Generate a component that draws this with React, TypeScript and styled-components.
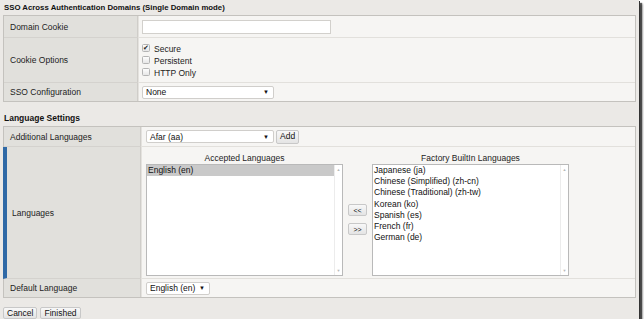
import React from "react";
import styled, { createGlobalStyle } from "styled-components";

const GlobalStyle = createGlobalStyle`
  html, body {
    margin: 0;
    padding: 0;
    background: #ffffff;
  }
  body {
    font-family: "Liberation Sans", Arial, sans-serif;
    font-size: 8.5px;
    color: #222;
  }
`;

const Page = styled.div`
  width: 639px;
  height: 319px;
  box-sizing: border-box;
  padding: 0 3px;
  background: #ebe9e6;
  overflow: hidden;
  box-shadow: 1px 1px 0 #333, 3px 3px 1px rgba(0, 0, 0, 0.6), 4px 4px 2px rgba(0, 0, 0, 0.3);
`;

const SectionTitle = styled.div<{ $top?: number; $size?: number }>`
  margin-top: ${(p) => p.$top ?? 0}px;
  height: 15px;
  line-height: 15px;
  padding-left: 1px;
  font-weight: bold;
  font-size: ${(p) => p.$size ?? 8.5}px;
  color: #111;
`;

const Table = styled.div<{ $labelWidth: number }>`
  display: grid;
  grid-template-columns: ${(p) => p.$labelWidth}px 1fr;
  border: 1px solid #c4c2be;
  background: #f6f5f3;
`;

const Label = styled.div<{ $h: number; $accent?: boolean }>`
  height: ${(p) => p.$h}px;
  display: flex;
  align-items: center;
  padding-left: ${(p) => (p.$accent ? 5 : 6)}px;
  background: #e1e0dc;
  border-left: ${(p) => (p.$accent ? "4px solid #2f69a6" : "0")};
  margin-left: ${(p) => (p.$accent ? "-1px" : "0")};
  border-right: 1px solid #cfcdc9;
  border-bottom: 1px solid #d4d2ce;
  &:nth-last-child(2) {
    border-bottom: 0;
  }
`;

const Value = styled.div<{ $h: number; $pad?: number }>`
  height: ${(p) => p.$h}px;
  display: flex;
  align-items: center;
  padding-left: ${(p) => p.$pad ?? 3}px;
  border-left: 1px solid #e4e2de;
  border-bottom: 1px solid #e2e0dc;
  &:last-child {
    border-bottom: 0;
  }
`;

const TextInput = styled.div`
  width: 189px;
  height: 14px;
  box-sizing: border-box;
  background: #fff;
  border: 1px solid #d2d0cc;
`;

const CheckList = styled.div`
  display: flex;
  flex-direction: column;
  padding-top: 1px;
`;

const CheckRow = styled.div`
  display: flex;
  align-items: center;
  height: 12px;
  gap: 4px;
`;

const Box = styled.span`
  width: 6px;
  height: 6px;
  border: 1px solid #b4b4b4;
  border-radius: 1.5px;
  background: linear-gradient(#fdfdfd, #e6e6e6);
  position: relative;
  top: -1px;
  font-size: 7px;
  line-height: 6px;
  color: #222;
  display: flex;
  justify-content: center;
`;

const Select = styled.div<{ $w: number }>`
  width: ${(p) => p.$w}px;
  height: 13px;
  box-sizing: border-box;
  background: #fff;
  border: 1px solid #d0cecb;
  border-radius: 2px;
  display: flex;
  align-items: center;
  justify-content: space-between;
  padding: 0 4px 0 3px;
  color: #111;
`;

const Arrow = styled.span`
  font-size: 6px;
`;

const SmallButton = styled.button<{ $h?: number }>`
  font-family: inherit;
  font-size: 8.5px;
  color: #111;
  height: ${(p) => p.$h ?? 14}px;
  line-height: 1;
  padding: 0 3px;
  background: linear-gradient(#f8f8f8, #e4e4e4);
  border: 1px solid #c8c8c8;
  border-radius: 2px;
`;

const LangWrap = styled.div`
  display: flex;
  align-items: flex-start;
  gap: 5px;
  padding-top: 5px;
  align-self: flex-start;
`;

const ListCol = styled.div<{ $w: number }>`
  width: ${(p) => p.$w}px;
  display: flex;
  flex-direction: column;
`;

const ListHeading = styled.div`
  height: 12px;
  line-height: 12px;
  text-align: center;
  color: #222;
`;

const ListBox = styled.div`
  height: 112px;
  box-sizing: border-box;
  background: #fff;
  border: 1px solid #b9b9b9;
  display: flex;
`;

const Items = styled.div`
  flex: 1;
  display: flex;
  flex-direction: column;
`;

const Item = styled.div<{ $sel?: boolean }>`
  height: 11.2px;
  line-height: 11.2px;
  padding-left: 1px;
  color: #111;
  background: ${(p) => (p.$sel ? "#c9c9c9" : "transparent")};
`;

const Scroll = styled.div`
  width: 7px;
  border-left: 1px solid #ececec;
  display: flex;
  flex-direction: column;
  justify-content: space-between;
  align-items: center;
  color: #b8b8b8;
  font-size: 4px;
  padding: 2px 0;
`;

const Mover = styled.div`
  display: flex;
  flex-direction: column;
  gap: 7px;
  padding-top: 52px;
`;

const MoveButton = styled(SmallButton)`
  width: 19px;
  height: 12px;
  font-size: 7px;
  padding: 0;
`;

const Footer = styled.div`
  display: flex;
  gap: 3px;
  margin-top: 9px;
`;

const boxes = [
  { label: "Secure", on: true },
  { label: "Persistent", on: false },
  { label: "HTTP Only", on: false },
];

const factory = [
  "Japanese (ja)",
  "Chinese (Simplified) (zh-cn)",
  "Chinese (Traditional) (zh-tw)",
  "Korean (ko)",
  "Spanish (es)",
  "French (fr)",
  "German (de)",
];

const ListPanel = ({ title, items, selected, w }: { title: string; items: string[]; selected?: number; w: number }) => (
  <ListCol $w={w}>
    <ListHeading>{title}</ListHeading>
    <ListBox>
      <Items>
        {items.map((it, i) => (
          <Item key={it} $sel={i === selected}>
            {it}
          </Item>
        ))}
      </Items>
      <Scroll>
        <span>▲</span>
        <span>▼</span>
      </Scroll>
    </ListBox>
  </ListCol>
);

export default function App() {
  return (
    <>
      <GlobalStyle />
      <Page>
        <SectionTitle $size={7.8}>SSO Across Authentication Domains (Single Domain mode)</SectionTitle>
        <Table $labelWidth={134}>
          <Label $h={21}>Domain Cookie</Label>
          <Value $h={21}>
            <TextInput />
          </Value>
          <Label $h={44}>Cookie Options</Label>
          <Value $h={44}>
            <CheckList>
              {boxes.map((b) => (
                <CheckRow key={b.label}>
                  <Box>{b.on ? "✔" : ""}</Box>
                  {b.label}
                </CheckRow>
              ))}
            </CheckList>
          </Value>
          <Label $h={18}>SSO Configuration</Label>
          <Value $h={18}>
            <Select $w={132}>
              None <Arrow>▼</Arrow>
            </Select>
          </Value>
        </Table>

        <SectionTitle $top={9}>Language Settings</SectionTitle>
        <Table $labelWidth={137}>
          <Label $h={19}>Additional Languages</Label>
          <Value $h={19} $pad={4}>
            <Select $w={128}>
              Afar (aa) <Arrow>▼</Arrow>
            </Select>
            <SmallButton style={{ marginLeft: 2 }}>Add</SmallButton>
          </Value>
          <Label $h={131} $accent>
            Languages
          </Label>
          <Value $h={131} $pad={4}>
            <LangWrap>
              <ListPanel title="Accepted Languages" items={["English (en)"]} selected={0} w={197} />
              <Mover>
                <MoveButton>&lt;&lt;</MoveButton>
                <MoveButton>&gt;&gt;</MoveButton>
              </Mover>
              <ListPanel title="Factory BuiltIn Languages" items={factory} w={197} />
            </LangWrap>
          </Value>
          <Label $h={18}>Default Language</Label>
          <Value $h={18} $pad={4}>
            <Select $w={64}>
              English (en) <Arrow>▼</Arrow>
            </Select>
          </Value>
        </Table>

        <Footer>
          <SmallButton $h={12}>Cancel</SmallButton>
          <SmallButton $h={12}>Finished</SmallButton>
        </Footer>
      </Page>
    </>
  );
}
